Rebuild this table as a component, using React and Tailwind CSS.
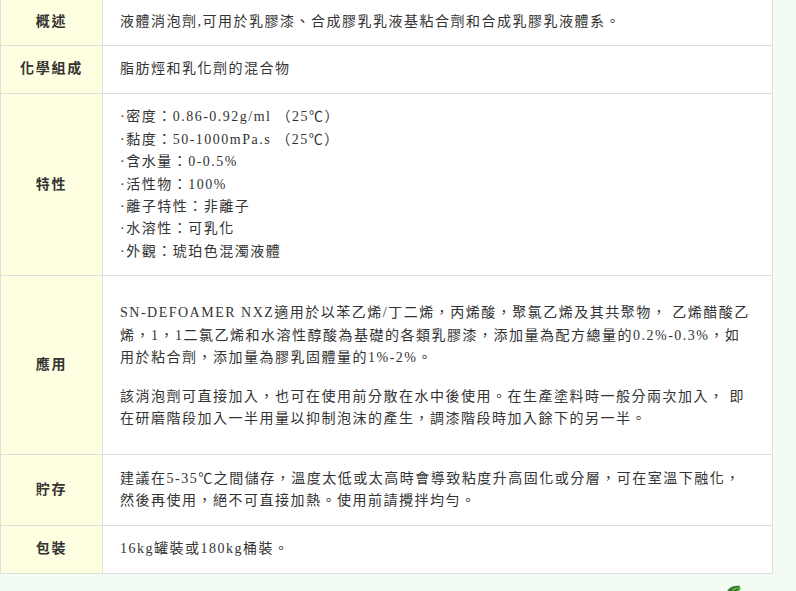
import React from "react";

const font = "font-['Liberation_Serif','Noto_Sans_CJK_TC',serif]";

const Row = ({ label, first, children, pad = "py-[12.3px]" }) => (
  <div className={`flex ${first ? "" : "border-t border-[#dedede]"}`}>
    <div className="w-[102px] shrink-0 bg-[#fefee0] border-r border-[#dedede] flex items-center justify-center font-bold text-[#333] tracking-[1.8px]">
      {label}
    </div>
    <div className={`flex-1 pl-[17px] pr-[19px] ${pad}`}>{children}</div>
  </div>
);

export default function App() {
  return (
    <div className={`min-h-screen bg-[#f2fcf2] text-[14px] leading-[22.4px] text-[#333] tracking-[1.5px] ${font}`}>
      <div className="w-[773px] bg-white border-l border-r border-b border-[#dedede]">
        {/* 概述 */}
        <Row label="概述" first pad="pt-[10.8px] pb-[11.8px]">
          液體消泡劑,可用於乳膠漆、合成膠乳乳液基粘合劑和合成乳膠乳液體系。
        </Row>

        {/* 化學組成 */}
        <Row label="化學組成">脂肪烴和乳化劑的混合物</Row>

        {/* 特性 */}
        <Row label="特性">
          <div className="flex flex-col">
            <span>·密度：0.86-0.92g/ml （25℃）</span>
            <span>·黏度：50-1000mPa.s （25℃）</span>
            <span>·含水量：0-0.5%</span>
            <span>·活性物：100%</span>
            <span>·離子特性：非離子</span>
            <span>·水溶性：可乳化</span>
            <span>·外觀：琥珀色混濁液體</span>
          </div>
        </Row>

        {/* 應用 */}
        <Row label="應用" pad="pt-[26px] pb-[24px]">
          <div className="flex flex-col gap-[16px]">
            <p>
              SN-DEFOAMER NXZ適用於以苯乙烯/丁二烯，丙烯酸，聚氯乙烯及其共聚物， 乙烯醋酸乙烯，1，1二氯乙烯和水溶性醇酸為基礎的各類乳膠漆，添加量為配方總量的0.2%-0.3%，如用於粘合劑，添加量為膠乳固體量的1%-2%。
            </p>
            <p>
              該消泡劑可直接加入，也可在使用前分散在水中後使用。在生產塗料時一般分兩次加入， 即在研磨階段加入一半用量以抑制泡沫的產生，調漆階段時加入餘下的另一半。
            </p>
          </div>
        </Row>

        {/* 貯存 */}
        <Row label="貯存">
          建議在5-35℃之間儲存，溫度太低或太高時會導致粘度升高固化或分層，可在室溫下融化，然後再使用，絕不可直接加熱。使用前請攪拌均勻。
        </Row>

        {/* 包裝 */}
        <Row label="包裝">16kg罐裝或180kg桶裝。</Row>
      </div>

      <div className="pl-[723px] pt-[9px]">
        <svg width="22" height="20" viewBox="0 0 22 20">
          <path d="M3 12 C4 5 10 2 17 3 C16 9 12 14 5 15 Z" fill="#2f7a2a" />
          <path d="M9 6 C12 4 15 4 18 5 C17 8 14 10 10 10 Z" fill="#5aa845" />
          <path d="M2 16 C6 12 10 9 15 6" stroke="#1d4f1a" strokeWidth="1" fill="none" />
        </svg>
      </div>
    </div>
  );
}
